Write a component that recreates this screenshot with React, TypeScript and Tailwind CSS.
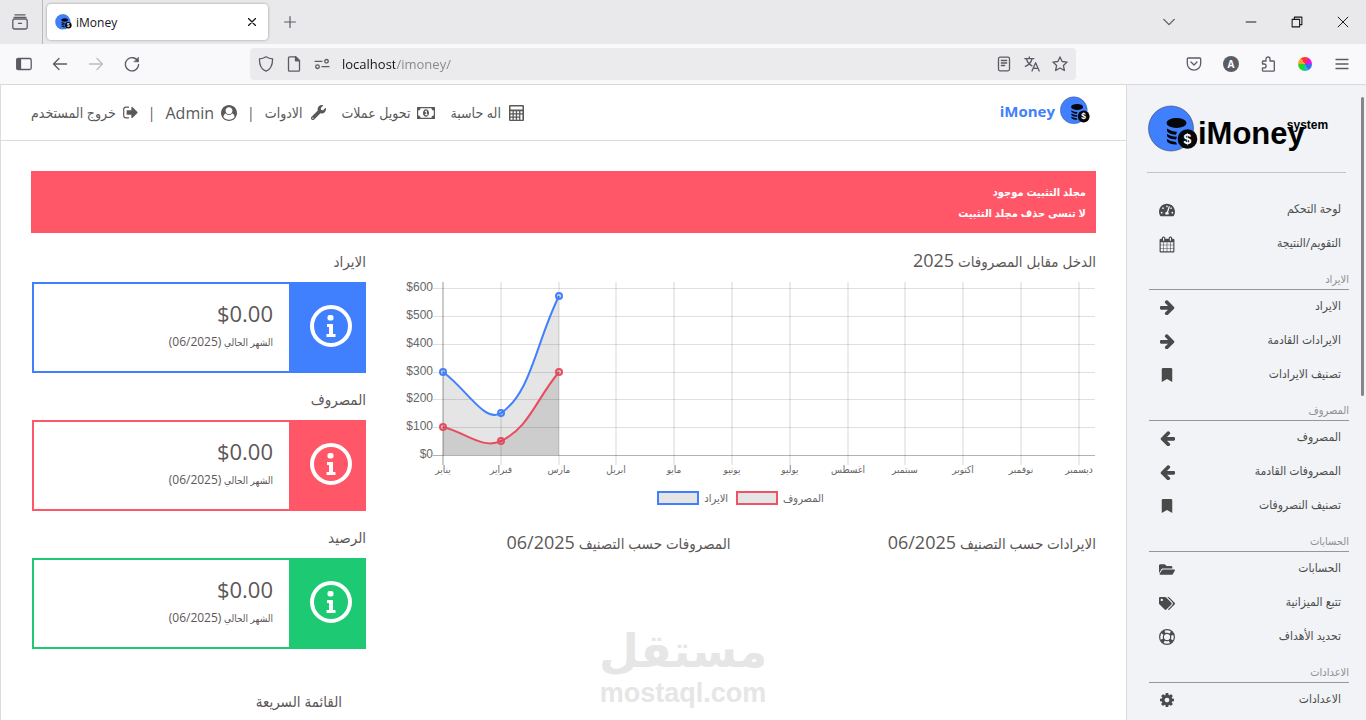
import React from "react";
import { FaBookmark, FaFolderOpen, FaTachometerAlt, FaTags, FaWrench } from "react-icons/fa";

type IconProps = { className?: string };

/* ---------- icons ---------- */

const CalendarIcon = ({ className }: IconProps) => (
  <svg viewBox="0 0 1792 1792" className={className} fill="currentColor" aria-hidden="true">
    <path d="M192 1664h288v-288h-288v288zm352 0h320v-288h-320v288zm-352-352h288v-320h-288v320zm352 0h320v-320h-320v320zm-352-384h288v-288h-288v288zm736 736h320v-288h-320v288zm-384-736h320v-288h-320v288zm768 736h288v-288h-288v288zm-384-352h320v-320h-320v320zm-352-864v-288q0-13-9.5-22.5t-22.5-9.5h-64q-13 0-22.5 9.5t-9.5 22.5v288q0 13 9.5 22.5t22.5 9.5h64q13 0 22.5-9.5t9.5-22.5zm736 864h288v-320h-288v320zm-384-384h320v-288h-320v288zm384 0h288v-288h-288v288zm32-480v-288q0-13-9.5-22.5t-22.5-9.5h-64q-13 0-22.5 9.5t-9.5 22.5v288q0 13 9.5 22.5t22.5 9.5h64q13 0 22.5-9.5t9.5-22.5zm384-64v1280q0 52-38 90t-90 38h-1408q-52 0-90-38t-38-90v-1280q0-52 38-90t90-38h128v-96q0-66 47-113t113-47h64q66 0 113 47t47 113v96h384v-96q0-66 47-113t113-47h64q66 0 113 47t47 113v96h128q52 0 90 38t38 90z" />
  </svg>
);

const ArrowIcon = ({ className }: IconProps) => (
  <svg viewBox="128 160 1536 1536" className={className} fill="currentColor" aria-hidden="true">
    <path d="M1600 960q0 54-37 91l-651 651q-39 37-91 37-51 0-90-37l-75-75q-38-38-38-91t38-91l293-293h-704q-52 0-84.5-37.5t-32.500-90.500v-128q0-53 32.500-90.500t84.500-37.500h704l-293-294q-38-36-38-90t38-90l75-75q38-38 90-38 53 0 91 38l651 651q37 35 37 90z" />
  </svg>
);

const CogIcon = ({ className }: IconProps) => (
  <svg viewBox="128 128 1536 1536" className={className} fill="currentColor" fillRule="evenodd" aria-hidden="true">
    <path d="M1152 896q0-106-75-181t-181-75-181 75-75 181 75 181 181 75 181-75 75-181zm512-109v222q0 12-8 23t-20 13l-185 28q-19 54-39 91 35 50 107 138 10 12 10 25t-9 23q-27 37-99 108t-94 71q-12 0-26-9l-138-108q-44 23-91 38-16 136-29 186-7 28-36 28h-222q-14 0-24.500-8.500t-11.500-21.500l-28-184q-49-16-90-37l-141 107q-10 9-25 9-14 0-25-11-126-114-165-168-7-10-7-23 0-12 8-23 15-21 51-66.500t54-70.500q-27-50-41-99l-183-27q-13-2-21-12.500t-8-23.500v-222q0-12 8-23t19-13l186-28q14-46 39-92-40-57-107-138-10-12-10-24 0-10 9-23 26-36 98.500-107.500t94.500-71.500q13 0 26 10l138 107q44-23 91-38 16-136 29-186 7-28 36-28h222q14 0 24.500 8.500t11.500 21.500l28 184q49 16 90 37l142-107q9-9 24-9 13 0 25 10 129 119 165 170 7 8 7 22 0 12-8 23-15 21-51 66.500t-54 70.500q26 50 41 98l183 28q13 2 21 12.500t8 23.500z" />
  </svg>
);

const SignOutIcon = ({ className }: IconProps) => (
  <svg viewBox="64 192 1600 1408" className={className} fill="currentColor" aria-hidden="true">
    <path d="M704 1440q0 4 1 20t.5 26.5-3 23.5-10 19.5-20.5 6.5h-320q-119 0-203.5-84.5t-84.5-203.5v-704q0-119 84.5-203.5t203.5-84.5h320q13 0 22.5 9.5t9.5 22.5q0 4 1 20t.5 26.5-3 23.5-10 19.5-20.5 6.5h-320q-66 0-113 47t-47 113v704q0 66 47 113t113 47h312l11.5 1 11.5 3 8 5.5 7 9 2 13.5zm928-544q0 26-19 45l-544 544q-19 19-45 19t-45-19-19-45v-288h-448q-26 0-45-19t-19-45v-384q0-26 19-45t45-19h448v-288q0-26 19-45t45-19 45 19l544 544q19 19 19 45z" />
  </svg>
);

const UserCircleIcon = ({ className }: IconProps) => (
  <svg viewBox="0 0 1792 1792" className={className} fill="currentColor" fillRule="evenodd" aria-hidden="true">
    <path d="M1523 1339q-22-155-87.5-257.5t-184.5-118.5q-67 74-159.5 115.5t-195.5 41.5-195.5-41.5-159.5-115.5q-119 16-184.5 118.5t-87.5 257.5q106 150 271 237.5t356 87.5 356-87.5 271-237.5zm-243-699q0-159-112.5-271.5t-271.5-112.5-271.5 112.5-112.5 271.5 112.5 271.5 271.5 112.5 271.5-112.5 112.5-271.5zm512 256q0 182-71 347.5t-190.5 286-285.5 191.5-349 71q-182 0-348-71t-286-191-191-286-71-348 71-348 191-286 286-191 348-71 348 71 286 191 191 286 71 348z" />
  </svg>
);

const CalculatorIcon = ({ className }: IconProps) => (
  <svg viewBox="0 0 15 16" className={className} fill="currentColor" fillRule="evenodd" aria-hidden="true">
    <path d="M1 0h13a1 1 0 0 1 1 1v14a1 1 0 0 1-1 1H1a1 1 0 0 1-1-1V1a1 1 0 0 1 1-1zM1.500 1.500v3h12v-3zM1.500 6.200v2h2v-2zM4.800 6.200v2h2v-2zM8.100 6.200v2h2v-2zM11.400 6.200v2h2v-2zM1.500 9.500v2h2v-2zM4.800 9.500v2h2v-2zM8.100 9.500v2h2v-2zM1.500 12.800v2h2v-2zM4.800 12.800v2h2v-2zM8.100 12.800v2h2v-2zM11.400 9.500v5.300h2V9.500z" />
  </svg>
);

const MoneyIcon = ({ className }: IconProps) => (
  <svg viewBox="0 0 18 12" className={className} fill="currentColor" fillRule="evenodd" aria-hidden="true">
    <path d="M.6 0h16.800a.6.600 0 0 1 .6.600v10.800a.6.600 0 0 1-.6.600H.6a.6.600 0 0 1-.6-.6V.6A.6.600 0 0 1 .6 0zM3.600 1.200a2.400 2.400 0 0 1-2.400 2.400v4.800a2.400 2.400 0 0 1 2.400 2.400h10.800a2.400 2.400 0 0 1 2.400-2.400V3.600a2.400 2.400 0 0 1-2.400-2.400z" />
    <path d="M9 2.200c1.900 0 3 1.900 3 3.800s-1.100 3.800-3 3.800S6 7.900 6 6s1.100-3.800 3-3.800zM7.600 4.300l.7.800.5-.4v2.600h-1v.9h2.900v-.9h-.9V3.500h-.9z" />
  </svg>
);

const LifeRingIcon = ({ className }: IconProps) => (
  <svg viewBox="0 0 16 16" className={className} fill="none" stroke="currentColor" aria-hidden="true">
    <circle cx="8" cy="8" r="7.400" strokeWidth="1.200" />
    <circle cx="8" cy="8" r="3.700" strokeWidth="1.200" />
    <circle cx="8" cy="8" r="5.500" strokeWidth="3.400" strokeDasharray="3.200 5.440" strokeDashoffset="-2.720" />
  </svg>
);

const InfoIcon = ({ className }: IconProps) => (
  <svg viewBox="0 0 42 42" className={className} aria-hidden="true">
    <circle cx="21" cy="21" r="19" fill="none" stroke="currentColor" strokeWidth="4" />
    <rect x="17.500" y="10" width="6" height="5.500" rx="2" fill="currentColor" />
    <path d="M17 19h6v10h2.500v3h-9v-3H19v-7h-2z" fill="currentColor" />
  </svg>
);

const Coins = ({ className }: IconProps) => (
  <svg viewBox="0 0 50 48" className={className} aria-hidden="true">
    <circle cx="23" cy="23.500" r="22.500" fill="#4080ff" stroke="#33415c" strokeWidth=".6" />
    <ellipse cx="28.500" cy="18" rx="10" ry="5" fill="#05070b" />
    <g fill="#05070b">
      <path d="M19 23.500q4 3 10 3.200l-1 3q-6 0-9-3.500z" />
      <path d="M19 28.800q4 3 10 3l-1 2.800q-6 0-9-3.300z" />
      <path d="M19 34q4 3 9 3l1 2.500q-7 .5-10-3z" />
    </g>
    <circle cx="39.500" cy="34" r="9.800" fill="#05070b" />
    <text x="39.500" y="39" textAnchor="middle" fontSize="14" fontWeight="700" fill="#fff" fontFamily="Liberation Sans, sans-serif">
      $
    </text>
  </svg>
);

const Line = ({ className, children }: { className?: string; children: React.ReactNode }) => (
  <svg
    viewBox="0 0 16 16"
    className={className ?? "size-4"}
    fill="none"
    stroke="currentColor"
    strokeWidth="1.300"
    strokeLinecap="round"
    strokeLinejoin="round"
    aria-hidden="true"
  >
    {children}
  </svg>
);

/* ---------- browser frame ---------- */

const TabBar = () => (
  <div className="flex h-11 shrink-0 items-center bg-[#e9e9eb] text-[#5b5b66]">
    <div className="flex h-full w-[43px] shrink-0 items-center border-r border-[#b9b9bd] pl-3">
      <button aria-label="Recent browsing" className="block">
        <Line>
          <path d="M3 .8h10M2 3.300h12" />
          <rect x=".8" y="5" width="14.400" height="10" rx="1.800" />
          <path d="M6.500 9.300h3" />
        </Line>
      </button>
    </div>
    <div className="ml-1 flex h-9 w-[221px] items-center rounded-sm bg-white pr-3 pl-2 shadow-[0_0_3px_rgba(0,0,0,0.35)]">
      <Coins className="h-4 w-[17px]" />
      <span className="ml-1 flex-1 pt-[2px] text-xs text-[#15141a]">iMoney</span>
      <button aria-label="Close tab" className="text-[#15141a]">
        <Line className="size-2">
          <path d="M1 1l14 14M15 1L1 15" strokeWidth="2.600" />
        </Line>
      </button>
    </div>
    <button aria-label="New tab" className="ml-4">
      <Line className="size-3">
        <path d="M8 .8v14.400M.8 8h14.400" strokeWidth="1.600" />
      </Line>
    </button>
    <div className="flex-1" />
    <div className="flex items-center gap-[34px] pr-[17px] text-[#15141a]">
      <button aria-label="List all tabs" className="mr-9 text-[#5b5b66]">
        <Line className="size-3">
          <path d="M1 4.500l7 7 7-7" strokeWidth="1.700" />
        </Line>
      </button>
      <button aria-label="Minimize">
        <Line className="size-3">
          <path d="M1.500 8h13" />
        </Line>
      </button>
      <button aria-label="Restore">
        <Line className="size-3">
          <path d="M1.500 4.500h10v10h-10zM4.500 4.500v-3h10v10h-3" strokeWidth="1.400" />
        </Line>
      </button>
      <button aria-label="Close window">
        <Line className="size-3">
          <path d="M1.500 1.500l13 13M14.500 1.500l-13 13" />
        </Line>
      </button>
    </div>
  </div>
);

const Toolbar = () => (
  <div className="flex h-[41px] shrink-0 items-center border-b border-[#d9d9dc] bg-[#f9f9fb] text-[#5b5b66]">
    <div className="flex w-[250px] shrink-0 items-center gap-5 pl-4">
      <button aria-label="Sidebar">
        <Line>
          <rect x=".8" y="2.500" width="14.400" height="11" rx="1.500" />
          <path d="M1 3h3.500v10H1z" fill="currentColor" />
        </Line>
      </button>
      <button aria-label="Back">
        <Line>
          <path d="M14.500 8h-13M7 2.500L1.500 8 7 13.500" />
        </Line>
      </button>
      <button aria-label="Forward" className="text-[#bcbcc2]">
        <Line>
          <path d="M1.500 8h13M9 2.500L14.500 8 9 13.500" />
        </Line>
      </button>
      <button aria-label="Reload">
        <Line>
          <path d="M14 5.500A6.600 6.600 0 1 0 14.600 8.500" />
          <path d="M14.500 1.500v4.300h-4.300z" fill="currentColor" strokeWidth=".6" />
        </Line>
      </button>
    </div>
    <div className="flex h-8 flex-1 items-center gap-3 rounded-sm bg-[#ebebed] px-2">
      <Line>
        <path d="M8 .8C6.200 2 3.900 2.800 1.400 2.900c0 6 1.600 10.300 6.600 12.300 5-2 6.600-6.300 6.600-12.300C12.100 2.800 9.800 2 8 .8z" />
      </Line>
      <Line>
        <path d="M3.500.8h6l4 4v9.400a1 1 0 0 1-1 1h-9a1 1 0 0 1-1-1V1.800a1 1 0 0 1 1-1z" />
        <path d="M9.500.8v4h4z" fill="currentColor" />
      </Line>
      <Line>
        <circle cx="12.500" cy="5.300" r="1.800" />
        <circle cx="3.500" cy="10.700" r="1.800" />
        <path d="M1 5.300h7M8 10.700h7" />
      </Line>
      <input
        aria-label="Address"
        defaultValue="localhost/imoney/"
        className="min-w-0 flex-1 bg-[linear-gradient(90deg,#15141a_53px,#86858b_53px)] bg-clip-text pt-[2px] text-[13px] text-transparent caret-black outline-none"
      />
      <button aria-label="Reader view">
        <Line>
          <rect x="2.500" y="1.200" width="11" height="13.600" rx="1.500" />
          <path d="M5.300 4.500h5.400M5.300 7h5.400M5.300 9.500h3.400" />
        </Line>
      </button>
      <button aria-label="Translate">
        <Line>
          <path d="M.8 2.700h9M5.300.8v1.900M2.500 3c.8 3.200 3 5.600 5.500 6.800M8 3C7.200 6.200 4.500 9 1.300 10.300M8 15l3.600-8.300L15.200 15M9.200 12.300h4.900" />
        </Line>
      </button>
      <button aria-label="Bookmark">
        <Line>
          <path d="M8 .9l2.100 4.600 5 .6-3.700 3.400 1 5L8 12l-4.400 2.500 1-5L.9 6.100l5-.6z" />
        </Line>
      </button>
    </div>
    <div className="flex w-[290px] shrink-0 items-center justify-end gap-[21px] pr-4">
      <button aria-label="Pocket">
        <Line>
          <path d="M2.300 2h11.400a1 1 0 0 1 1 1v4.500A6.700 6.700 0 0 1 1.300 7.500V3a1 1 0 0 1 1-1z" />
          <path d="M5 6l3 3 3-3" />
        </Line>
      </button>
      <button
        aria-label="Account"
        className="flex size-4 items-center justify-center rounded-full bg-[#5b5b66] text-[10px] font-bold text-white"
      >
        A
      </button>
      <button aria-label="Extensions">
        <Line>
          <path d="M6 5V3a2 2 0 0 1 4 0v2h3.500a.8.800 0 0 1 .8.800v8.600a.8.800 0 0 1-.8.800H3.300a.8.800 0 0 1-.8-.8v-2.600h1.700a1.900 1.900 0 0 0 0-3.800H2.500V5.800A.8.800 0 0 1 3.300 5z" />
        </Line>
      </button>
      <button
        aria-label="Color picker"
        className="mx-px size-[14px] rounded-full bg-[conic-gradient(#f33_0_30deg,#e815e0_30deg_90deg,#3a6cf0_90deg_150deg,#22b8c8_150deg_195deg,#19d92b_195deg_265deg,#f5a03a_265deg_325deg,#f33_325deg)]"
      />
      <button aria-label="Menu">
        <Line>
          <path d="M2 3.500h12M2 8h12M2 12.500h12" />
        </Line>
      </button>
    </div>
  </div>
);

/* ---------- sidebar ---------- */

type Item = { label: string; icon: React.ReactNode };
type Group = { title?: string; items: Item[] };

const groups: Group[] = [
  {
    items: [
      { label: "لوحة التحكم", icon: <FaTachometerAlt className="size-4" /> },
      { label: "التقويم/النتيجة", icon: <CalendarIcon className="size-[17px]" /> },
    ],
  },
  {
    title: "الايراد",
    items: [
      { label: "الايراد", icon: <ArrowIcon className="size-[15px]" /> },
      { label: "الايرادات القادمة", icon: <ArrowIcon className="size-[15px]" /> },
      { label: "تصنيف الايرادات", icon: <FaBookmark className="h-[14px] w-3" /> },
    ],
  },
  {
    title: "المصروف",
    items: [
      { label: "المصروف", icon: <ArrowIcon className="size-[15px] -scale-x-100" /> },
      { label: "المصروفات القادمة", icon: <ArrowIcon className="size-[15px] -scale-x-100" /> },
      { label: "تصنيف النصروفات", icon: <FaBookmark className="h-[14px] w-3" /> },
    ],
  },
  {
    title: "الحسابات",
    items: [
      { label: "الحسابات", icon: <FaFolderOpen className="size-[17px]" /> },
      { label: "تتبع الميزانية", icon: <FaTags className="size-[17px]" /> },
      { label: "تحديد الأهداف", icon: <LifeRingIcon className="size-4" /> },
    ],
  },
  {
    title: "الاعدادات",
    items: [{ label: "الاعدادات", icon: <CogIcon className="size-[14px]" /> }],
  },
];

const Sidebar = () => (
  <aside className="relative w-60 shrink-0 overflow-hidden border-l border-[#dcdcde] bg-[#f1f3f6] pr-[17px] pl-[22px] text-[#4d4d4d]">
    <div className="absolute top-3 right-[2px] h-[299px] w-[3px] rounded-full bg-[#85858a]" />
    <a
      href="#"
      dir="ltr"
      className="mt-5 -ml-px flex h-[50px] items-start text-black [font-family:'Liberation_Sans',sans-serif]"
    >
      <Coins className="h-12 w-[50px] shrink-0" />
      <span className="flex items-start font-bold">
        <span className="pt-[9px] text-[31px] leading-10">iMoney</span>
        <span className="-ml-[18px] pt-3 text-xs leading-4">system</span>
      </span>
    </a>
    <hr className="mt-[17px] mr-[3px] mb-5 -ml-[2px] border-[#c3c3c5]" />
    <nav>
      {groups.map((g, i) => (
        <div key={i}>
          {g.title && (
            <h2 className="flex h-[29px] items-center border-b border-[#97979b] pt-2 text-[11px] text-[#909094]">{g.title}</h2>
          )}
          <ul>
            {g.items.map((it) => (
              <li key={it.label}>
                <a href="#" className="flex h-[34px] items-center justify-between pr-2 pl-[10px] text-xs">
                  <span className="pb-[2px]">{it.label}</span>
                  <span className="flex w-4 justify-center text-[#4a4a4a]">{it.icon}</span>
                </a>
              </li>
            ))}
          </ul>
        </div>
      ))}
    </nav>
  </aside>
);

/* ---------- main area ---------- */

const TopNav = () => (
  <header className="flex h-14 items-center justify-between border-b border-[#dcdcde] px-[30px] text-[#595959]">
    <a href="#" dir="ltr" className="mr-[6px] flex items-center gap-[5px] pb-1 text-[15px] font-bold text-[#4080ff]">
      <span className="pt-[2px]">iMoney</span>
      <Coins className="h-[29px] w-[30px]" />
    </a>
    <nav className="flex items-center text-sm">
      <a href="#" className="flex items-center gap-2">
        <CalculatorIcon className="h-4 w-[15px]" />
        اله حاسبة
      </a>
      <a href="#" className="mr-4 flex items-center gap-[6px]">
        <MoneyIcon className="h-3 w-[18px]" />
        تحويل عملات
      </a>
      <a href="#" className="mr-4 flex items-center gap-2">
        <FaWrench className="size-[15px]" />
        الادوات
      </a>
      <span className="mx-[10px]">|</span>
      <a href="#" className="flex items-center gap-[7px] text-base">
        <UserCircleIcon className="size-4" />
        Admin
      </a>
      <span className="mx-[10px]">|</span>
      <a href="#" className="flex items-center gap-[7px]">
        <SignOutIcon className="h-[13px] w-[15px]" />
        خروج المستخدم
      </a>
    </nav>
  </header>
);

const months = ["يناير", "فبراير", "مارس", "ابريل", "مايو", "يونيو", "يوليو", "اغسطس", "سبتمبر", "اكتوبر", "نوفمبر", "ديسمبر"];
const ticks = [
  { label: "$600", y: 6 },
  { label: "$500", y: 34 },
  { label: "$400", y: 62 },
  { label: "$300", y: 90 },
  { label: "$200", y: 117 },
  { label: "$100", y: 145 },
  { label: "$0", y: 173 },
];
const monthX = (i: number) => 38 + Math.round(i * 57.8);

const income = "M38 90C61.200 106.400 79.600 141.700 96 131C126 111.300 130.800 60.800 154 14";
const expense = "M38 145C61.200 150.600 77.500 167.700 96 159C124 145.800 130.800 117.600 154 90";

const Chart = () => (
  <figure>
    <svg
      viewBox="0 0 691 200"
      className="block w-full overflow-visible"
      direction="ltr"
      role="img"
      aria-label="الدخل مقابل المصروفات 2025"
    >
      <g stroke="#000">
        {ticks.map((t) => (
          <path key={t.label} d={`M28 ${t.y + 0.5}H690`} strokeOpacity={t.label === "$0" ? ".3" : ".12"} />
        ))}
        {months.map((m, i) => (
          <path key={m} d={`M${monthX(i)} 0V183`} strokeOpacity={i === 0 ? ".2" : ".08"} strokeWidth={2} />
        ))}
      </g>
      <path d={`${income}V173H38z`} fill="#000" fillOpacity=".1" />
      <path d={`${expense}V173H38z`} fill="#000" fillOpacity=".1" />
      <path d={income} fill="none" stroke="#4080ff" strokeWidth="2" />
      <path d={expense} fill="none" stroke="#e84c5f" strokeWidth="2" />
      <g fill="#000" fillOpacity=".1" strokeWidth="2">
        <circle cx="38" cy="90" r="3" stroke="#4080ff" />
        <circle cx="96" cy="131" r="3" stroke="#4080ff" />
        <circle cx="154" cy="14" r="3" stroke="#4080ff" />
        <circle cx="38" cy="145" r="3" stroke="#e84c5f" />
        <circle cx="96" cy="159" r="3" stroke="#e84c5f" />
        <circle cx="154" cy="90" r="3" stroke="#e84c5f" />
      </g>
      <g fill="#666" fontSize="12" textAnchor="end" fontFamily="Liberation Sans, sans-serif">
        {ticks.map((t) => (
          <text key={t.label} x="28" y={t.y + 3}>
            {t.label}
          </text>
        ))}
      </g>
      <g fill="#666" fontSize="10" textAnchor="middle">
        {months.map((m, i) => (
          <text key={m} x={monthX(i)} y="191">
            {m}
          </text>
        ))}
      </g>
    </svg>
    <figcaption className="mt-2 flex h-4 items-center justify-center gap-2 pr-5 text-[11px] text-[#666]">
      <span className="flex items-center gap-[5px]">
        المصروف
        <span className="h-[14px] w-[42px] border-2 border-[#ee5468] bg-[#e5e5e5]" />
      </span>
      <span className="flex items-center gap-[5px]">
        الايراد
        <span className="h-[14px] w-[42px] border-2 border-[#4080ff] bg-[#e5e5e5]" />
      </span>
    </figcaption>
  </figure>
);

const cards = [
  { title: "الايراد", border: "border-[#4080ff]", fill: "bg-[#4080ff]" },
  { title: "المصروف", border: "border-[#ff5768]", fill: "bg-[#ff5768]" },
  { title: "الرصيد", border: "border-[#1ec973]", fill: "bg-[#1ec973]" },
];

const heading = "flex items-center text-[15px] leading-6 text-[#5c5757]";

const Main = () => (
  <main className="relative min-w-0 flex-1 overflow-hidden border-l border-[#dcdcde] bg-white">
    <TopNav />
    <div className="px-[30px] pt-[30px]">
      <div role="alert" className="bg-[#ff5768] p-[10px] text-[11px] leading-[21px] font-bold text-white">
        <p>مجلد التثبيت موجود</p>
        <p>لا تنسى حذف مجلد التثبيت</p>
      </div>
      <div className="flex gap-[39px] pt-[2px] pl-px">
        <div className="min-w-0 flex-1">
          <h3 className={`${heading} h-[47px] pt-1`}>
            <span>
              الدخل مقابل المصروفات <span className="text-lg leading-6">2025</span>
            </span>
          </h3>
          <Chart />
          <div className="mt-6 grid grid-cols-2 gap-10">
            <h3 className={heading}>
              <span>
                الايرادات حسب التصنيف <span className="text-lg leading-6">06/2025</span>
              </span>
            </h3>
            <h3 className={heading}>
              <span>
                المصروفات حسب التصنيف <span className="text-lg leading-6">06/2025</span>
              </span>
            </h3>
          </div>
        </div>
        <div className="w-[334px] shrink-0">
          {cards.map((c) => (
            <section key={c.title}>
              <h3 className={`${heading} h-[47px] pt-1`}>{c.title}</h3>
              <div className={`flex h-[91px] border-2 ${c.border}`}>
                <div className={`flex w-[75px] items-center justify-center pb-1 text-white ${c.fill}`}>
                  <InfoIcon className="ml-2 size-[42px]" />
                </div>
                <div className="flex-1 pt-[11px] pr-4 text-[#5c5757]">
                  <p className="text-[22px] leading-9" dir="ltr">
                    <span className="block text-right">$0.00</span>
                  </p>
                  <p className="pt-px text-[10px] leading-5">
                    الشهر الحالي <span className="text-xs leading-5">(06/2025)</span>
                  </p>
                </div>
              </div>
            </section>
          ))}
          <h3 className={`${heading} mt-10 pr-6`}>القائمة السريعة</h3>
        </div>
      </div>
    </div>
  </main>
);

const Watermark = () => (
  <div className="pointer-events-none absolute inset-x-0 bottom-3 flex flex-col items-center font-bold text-[#e6e6e6]">
    <span dir="rtl" className="text-[46px] leading-[54px] [font-family:'DejaVu_Sans',sans-serif]">
      مستقل
    </span>
    <span className="text-[27px] leading-[30px] [font-family:'Liberation_Sans',sans-serif]">mostaql.com</span>
  </div>
);

export default function App() {
  return (
    <div className="relative flex h-screen flex-col overflow-hidden [font-family:'Open_Sans','DejaVu_Sans_Condensed','DejaVu_Sans',sans-serif]">
      <TabBar />
      <Toolbar />
      <div dir="rtl" className="flex min-h-0 flex-1">
        <Sidebar />
        <Main />
      </div>
      <Watermark />
    </div>
  );
}
